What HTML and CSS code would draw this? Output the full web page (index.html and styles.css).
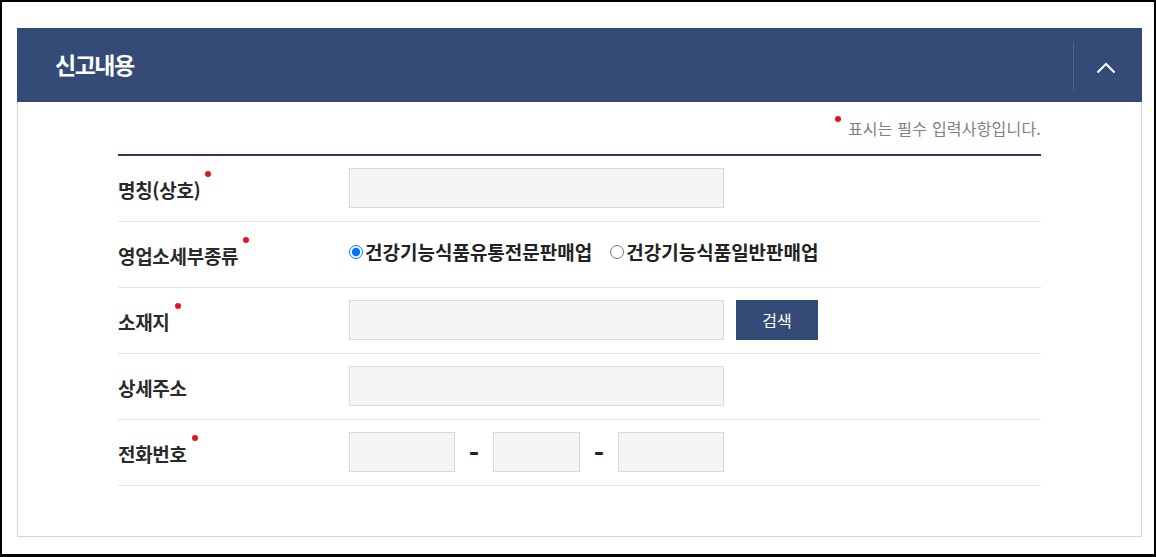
FILE: index.html
```html
<!DOCTYPE html>
<html lang="ko">
<head>
<meta charset="utf-8">
<title>신고내용</title>
<link rel="stylesheet" href="styles.css">
</head>
<body>
<div class="frame">
  <section class="panel">
    <header class="panel-head">
      <h2 class="panel-title">신고내용</h2>
      <button class="toggle" type="button" aria-label="접기">
        <svg width="20" height="12" viewBox="0 0 20 12"><polyline points="1.5,10.5 10,2 18.5,10.5" fill="none" stroke="#fff" stroke-width="2"/></svg>
      </button>
    </header>
    <div class="panel-body">
      <p class="req-note"><span class="note-dot"></span>표시는 필수 입력사항입니다.</p>
      <div class="form-table">
        <div class="row">
          <div class="label"><span class="req">명칭(상호)</span></div>
          <div class="field"><input class="inp inp-wide" type="text"></div>
        </div>
        <div class="row">
          <div class="label"><span class="req">영업소세부종류</span></div>
          <div class="field radios">
            <label class="radio"><input type="radio" name="kind" checked>건강기능식품유통전문판매업</label>
            <label class="radio"><input type="radio" name="kind">건강기능식품일반판매업</label>
          </div>
        </div>
        <div class="row">
          <div class="label"><span class="req">소재지</span></div>
          <div class="field"><input class="inp inp-wide" type="text"><button class="btn" type="button">검색</button></div>
        </div>
        <div class="row">
          <div class="label"><span>상세주소</span></div>
          <div class="field"><input class="inp inp-wide" type="text"></div>
        </div>
        <div class="row">
          <div class="label"><span class="req">전화번호</span></div>
          <div class="field"><input class="inp inp-tel" type="text"><span class="dash">-</span><input class="inp inp-tel-mid" type="text"><span class="dash">-</span><input class="inp inp-tel" type="text"></div>
        </div>
      </div>
    </div>
  </section>
</div>
</body>
</html>
```
FILE: styles.css
```css
html, body {
  margin: 0;
  padding: 0;
  background: #fff;
}
body {
  font-family: "Noto Sans CJK KR", "Noto Sans", sans-serif;
  color: #222;
}
.frame {
  height: 557px;
  box-sizing: border-box;
  border: 2px solid #000;
  border-bottom-width: 3px;
  padding: 26px 12px 0 15px;
}
.panel {
  width: 1125px;
}
.panel-head {
  height: 74px;
  background: #344b77;
  display: flex;
  align-items: flex-start;
  justify-content: space-between;
  padding-left: 38px;
}
.panel-title {
  margin: 0;
  color: #fff;
  font-size: 23px;
  font-weight: 700;
  letter-spacing: -1.5px;
  line-height: 72px;
}
.toggle {
  margin-top: 14px;
  width: 69px;
  height: 49px;
  border: 0;
  border-left: 1px solid rgba(255, 255, 255, 0.14);
  background: transparent;
  padding: 0 4px 0 0;
  display: flex;
  align-items: center;
  justify-content: center;
}
.toggle svg {
  display: block;
  margin-top: 3px;
}
.panel-body {
  border: 1px solid #d6d6d6;
  border-top: 0;
  padding: 0 100px 50px 100px;
}
.req-note {
  margin: 0;
  padding-top: 16px;
  height: 20px;
  line-height: 20px;
  text-align: right;
  font-size: 16px;
  color: #808080;
  margin-bottom: 16px;
  letter-spacing: 0.2px;
}
.note-dot {
  display: inline-block;
  width: 6px;
  height: 6px;
  border-radius: 50%;
  background: #e3141b;
  vertical-align: top;
  margin-top: -2px;
  margin-right: 7px;
}
.form-table {
  border-top: 2px solid #2c3b57;
}
.row {
  display: flex;
  align-items: center;
  height: 65px;
  border-bottom: 1px solid #e6e6e6;
}
.label {
  width: 231px;
  flex: none;
  font-size: 19px;
  font-weight: 700;
  color: #2a2a2a;
  padding-top: 1px;
  letter-spacing: -0.3px;
}
.label span {
  position: relative;
  display: inline-block;
  line-height: 26px;
}
.req::after {
  content: "";
  position: absolute;
  right: -11px;
  top: -6px;
  width: 6px;
  height: 6px;
  border-radius: 50%;
  background: #e3141b;
}
.field {
  display: flex;
  align-items: center;
  margin-top: -1px;
}
.inp {
  box-sizing: border-box;
  height: 40px;
  margin: 0;
  border: 1px solid #dadada;
  background: #f4f4f4;
  padding: 0 10px;
  font: inherit;
}
.inp-wide { width: 375px; }
.inp-tel { width: 106px; }
.inp-tel-mid { width: 87px; }
.dash {
  width: 38px;
  text-align: center;
  font-size: 28px;
  font-weight: 700;
  color: #222;
  line-height: 40px;
}
.btn {
  margin-left: 12px;
  width: 82px;
  height: 40px;
  border: 0;
  background: #344b77;
  color: #fff;
  font-family: inherit;
  font-size: 16px;
  padding: 0;
}
.radios {
  margin-top: -7px;
}
.radio {
  display: flex;
  align-items: center;
  font-size: 19px;
  font-weight: 700;
  color: #222;
  letter-spacing: 0;
  margin-right: 18px;
}
.radio input {
  margin: 2px 2px 0 0;
  width: 14px;
  height: 14px;
}
```
